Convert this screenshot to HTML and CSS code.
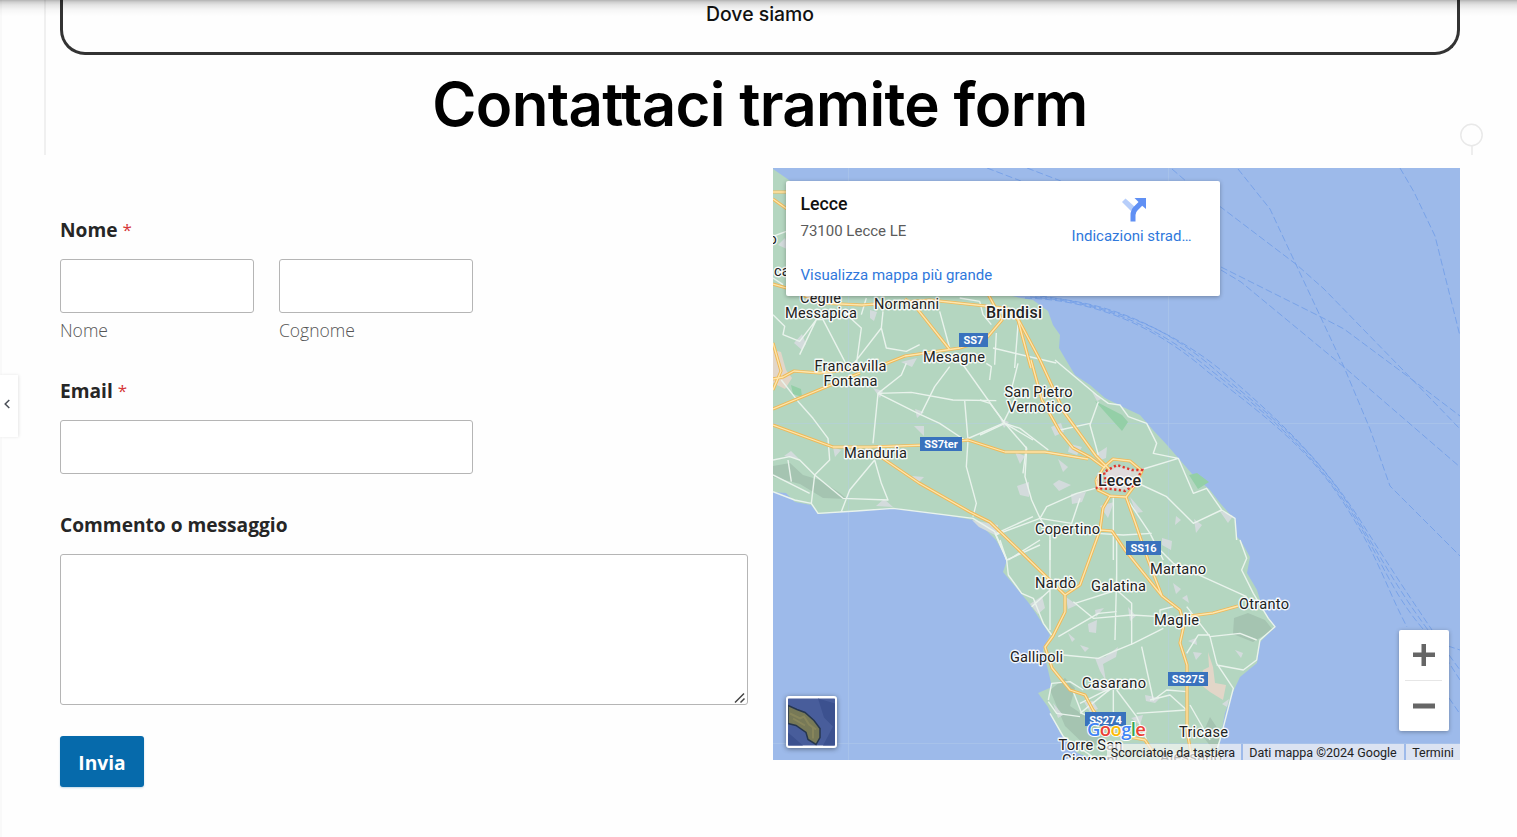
FILE: index.html
```html
<!DOCTYPE html>
<html lang="it">
<head>
<meta charset="utf-8">
<title>Contattaci</title>
<link rel="stylesheet" href="styles.css">
</head>
<body>
<div class="top-shadow"></div>
<div class="rail"></div>
<button class="drawer" aria-label="Apri"><svg width="8" height="10" viewBox="0 0 8 10"><path d="M6.3 1 2.2 5l4.1 4" fill="none" stroke="#4b5058" stroke-width="1.5"/></svg></button>
<div class="side-line"></div>
<svg class="marker" width="26" height="34" viewBox="0 0 26 34"><g fill="none" stroke="#e9e9e9" stroke-width="1.5"><circle cx="13.500" cy="13" r="10.700"/><path d="M14 24v9"/></g></svg>
<main class="page">
  <section class="where">Dove siamo</section>
  <h1 class="title"><span>Contattaci tramite form</span></h1>
  <div class="columns">
    <form class="form">
      <div class="label">Nome <span class="req">*</span></div>
      <div class="names">
        <div class="half"><input class="input"><div class="sub">Nome</div></div>
        <div class="half"><input class="input"><div class="sub">Cognome</div></div>
      </div>
      <div class="label email-label">Email <span class="req">*</span></div>
      <input class="input email">
      <div class="label message-label">Commento o messaggio</div>
      <div class="area"><svg width="12" height="12" viewBox="0 0 12 12"><path d="M1 10.5 10 1.5M6.5 10.5 10.5 6.5" stroke="#444" stroke-width="1.5" fill="none"/></svg></div>
      <button class="send" type="button">Invia</button>
    </form>
    <div class="map">
      <svg class="canvas" width="687" height="592" viewBox="773 168 687 592">
        <defs>
          <path id="roads" d="M773 192H787M773 199 787 209M773 284 790 289 820 303 862 305 930 300 1004 308M905 299 915 306 950 350M960 348 985 340 1002 320 988 294M1004 306 1018 320 1031 368M1031 360 1042 400 1060 432 1073 448 1090 457 1105 468M1017 317 1040 360 1064 412 1096 456 1110 470M773 379 783 377 794 371 820 373 880 366 905 356 960 348M773 409 826 387 860 373M773 425 833 447 870 447 925 445 968 440 1005 452 1045 452 1088 459M875 453 919 483 970 512 990 522 1022 553 1065 595M1096 480 1098 490 1110 496 1126 497 1135 485 1142 471 1130 461 1113 459 1104 467 1096 480M1110 496 1103 508 1100 530 1080 585 1065 595 1065 612 1053 636 1045 647 1052 668 1070 690 1085 695 1093 710 1110 733 1145 740 1155 755M1126 497 1135 522 1148 560 1162 596M1100 530 1112 531 1125 550 1162 596 1180 610 1184 625 1180 643 1187 665 1187 700 1187 730 1192 760M1190 616 1213 613 1238 606M773 343 781 371 773 390"/>
        </defs>
        <rect x="773" y="168" width="687" height="592" fill="#9dbaea"/>
        <path fill="#b4d6c0" d="M773 169 789 180 850 230 940 280 1021 298 1033 300 1048 311 1053 325 1060 335 1059 348 1066 360 1075 375 1090 385 1105 398 1123 407 1140 415 1153 430 1167 445 1180 460 1193 475 1210 490 1220 503 1235 520 1237 537 1241 541 1250 557 1247 573 1257 590 1263 610 1275 627 1260 642 1257 663 1240 677 1233 692 1225 713 1220 740 1218 760H1095L1077 753 1060 733 1048 707 1038 693 1052 687 1048 670 1043 650 1050 635 1035 612 1028 602 1003 572 1007 560 996 540 986 530 973 520 933 513 893 508 843 512 818 514 811 505 795 502 786 493 773 492Z"/>
        <g stroke="#b5cdea" stroke-width=".7" opacity=".65"><path d="M848.500 168V760M1168.500 168V760M773 423.500H1460M773 743.500H1460"/></g>
        <!-- ferry routes -->
        <g class="ferry">
          <path d="M987 168l34 13M1027 168l34 13M1172 169l22 19 28 20 75 57 27 24 77 79 60 62M1238 169l32 40 74 158 26 62 20 57 70 70M1400 168l14 24 21 44 25 100M1221 267l100 50 23 12 70 52 46 35M1221 270l20 12 103 85 116 100"/>
          <path d="M1025 298C1100 300 1160 330 1208 372C1270 420 1310 450 1345 505S1385 585 1407 627"/>
          <path d="M1030 297C1110 302 1165 332 1213 372C1275 420 1315 455 1350 510S1390 590 1423 629"/>
          <path d="M1035 297C1110 300 1172 330 1220 374C1280 422 1322 460 1355 515S1400 592 1428 630L1460 680"/>
          <path d="M1040 296C1115 305 1178 333 1228 376C1285 425 1325 465 1360 520S1405 590 1432 630M1448 646 1460 650M1449 655 1460 670M1449 698 1460 714"/>
        </g>
        <!-- relief and built-up areas -->
        <path fill="#a5c4b1" d="M773 466 790 463 803 475 820 480 840 493 847 499 823 498 800 484 773 477ZM1234 618l14-5 17 7 8 10-20 12-20-8ZM1050 690l15-12 10 10-5 18 15 10 20 20-15 14-25-24ZM1210 717l10 15-3 23-15-20Z"/>
        <path fill="#94cfa7" d="M1095 401 1122 415 1128 422 1122 431ZM1189 475l8-2 12 9-11 7ZM791 385l10 4 1 8-9-3Z"/>
        <path fill="#e2d6c8" d="M773 350l8 2 5 18 6 8-7 11-12-6ZM1208 652l5 15 2 16 11 2-3 15-13-8-10-8 3-14 6-3Z"/>
        <g fill="#d3dbdc">
          <path d="M794 343l8-9 4 10-4 6ZM870 310l7 2-3 9-4-3ZM873 388l10 3-3 7ZM915 409l9 3-7 6ZM914 426l10 0 0 10ZM876 506l8-7 9 8ZM912 476l12 1-6 6ZM833 447l8 3-6 7ZM784 456l7-5 8 8ZM901 362l16-4-5 9ZM1000 419l9 3-5 6ZM1015 452l10 4-5 8ZM1051 427l10-4 3 9-9 4ZM1070 444l12 3-5 8-9-3ZM1096 454l11-7-1 11-8 3ZM1092 392l5 3 4 4-4 2ZM1017 486l12-4 0 15-9-2ZM1058 459l10 8-5 5ZM1053 484l6-4 12 5-12 6ZM1071 494l15-2-4 10-10 2ZM1130 497l13 15-7 1ZM1100 506l14-4-6 16ZM1176 516l5 4-6 5ZM1194 519l8 6-6 8ZM1162 538l10 3-1 9-9-5ZM1219 510l14 6-5 7ZM1030 604l12-8 3 12-7 6ZM1066 597l11 8-9 4ZM1095 610l9-2-8 9ZM1088 624l9-4-1 13-7-1ZM1128 607l8 9-6 5ZM1173 583l8 6-5 5ZM1182 598l5-3 2 8ZM1188 641l8-3 1 7ZM1193 652l9 1-6 7ZM1068 633l7 6-3 3ZM1080 645l9 3-4 4ZM1095 658l10-1 13-10-2 10-13 7 3 17-6-10ZM1090 689l15-8 14 3-11 8ZM1145 695l15 3-5 5-9-2ZM1131 718l12-3-3 10ZM1053 703l10 12-5 3ZM1084 702l9-1 5 8-8 3ZM1222 704l7-5-2 8ZM1235 650l8 3-2 5Z"/>
          <path d="M1104 474l12-6 16 1-4 16-15 5ZM997 312l10-5 13 5-5 8ZM972 520l26 5-1 11-18-9ZM778 245l7-7 4 12Z"/>
        </g>
        <g class="minor">
          <g transform="translate(773 168) scale(.33333)"><path d="M0 440 35 475 30 500 80 520 130 455 150 455 220 590M130 455 80 560M210 430 265 480 250 590M265 440 280 390M330 430 325 480 340 540 400 550 440 530M325 480 240 590M500 430 530 540M620 400 630 440 655 470M670 495 665 590M735 470 725 600M660 540 850 585M0 205 40 190M0 330 30 350M560 390 620 400"/></g>
          <g transform="translate(773 360) scale(.33333)"><path d="M25 60 80 130 120 175 165 235 170 300 125 345 210 415 345 420 325 370 305 300 230 390 205 455M0 300 50 290 80 300 125 345 115 430M0 345 110 400M45 300 55 365M300 250 315 100 385 45 400 10M315 100 415 97 540 120 670 122M315 100 435 160 500 190 575 240 690 190M445 160 485 80 530 20M560 0 695 190 780 240M575 122 585 240 580 320 610 430 600 470M690 190 730 110M735 10 710 110M750 340 760 260M670 520 780 470M0 395 65 420 115 430 135 460 250 453 360 445 600 475 665 515 700 595M650 60 655 20 640 10"/></g>
          <g transform="translate(980 360) scale(.33333)"><path d="M0 225 75 190M75 190 30 130 0 120M75 190 140 265 135 350 155 420 180 475 45 525M75 190 120 205 205 270M225 0 350 105 385 130 420 135 445 170 500 190 530 250 520 280 595 295 480 330M355 125 330 195 355 285M240 210 330 190M595 295 640 400 680 385 725 450 765 475 770 540M485 375 560 410 640 490 725 450M345 385 290 400 200 440 180 475 210 520 210 600M300 415 275 490 180 475M400 410 400 600M440 415 510 520 550 600M350 520 430 525 515 520M45 520 80 600 180 555"/></g>
          <g transform="translate(980 540) scale(.33333)"><path d="M60 0 80 60 85 105 125 160 160 175 190 250 215 285M85 60 180 0M210 0 210 270M155 200 210 150M285 190 410 150 410 0M280 185 340 235 455 225 540 230M235 290 355 220 410 215M410 100 405 300M410 150 455 190 455 315M540 30 580 70 800 170M780 0 800 55 785 90 820 160 865 235 885 260 840 300 830 360 790 390 710 375M620 200 690 290 780 280 830 300M550 265 460 310 400 335 355 355 250 345M485 320 520 480 560 450 620 455M620 340 655 285 690 285M690 290 710 370 760 445 720 600 700 660M400 440 300 520M400 450 400 540M410 450 470 530 500 600M390 445 300 490M205 480 215 430 270 425 310 450M205 485 230 520 300 530M470 520 620 510 570 465 510 480M630 495 690 600M210 520 250 590 345 655M280 455 305 520 330 530M540 230 540 210 580 200"/></g>
        </g>
        <use href="#roads" class="road-case"/>
        <use href="#roads" class="road-core"/>
        <path d="M1106 484 1104 472 1117 465 1132 470 1142 470 1134 485 1125 491 1112 489 1096 488Z" fill="#eadbdc" fill-opacity=".6" stroke="#df352d" stroke-width="2.500" stroke-dasharray="2.200 2.500"/>
        <g fill="#3972bd"><rect x="959" y="333" width="29" height="14"/><rect x="920" y="437" width="42" height="14"/><rect x="1126" y="541" width="35" height="14"/><rect x="1168" y="672" width="40" height="14"/><rect x="1085" y="712" width="41" height="14"/></g>
        <g class="shield"><text x="973.500" y="344">SS7</text><text x="941" y="448">SS7ter</text><text x="1143.500" y="552">SS16</text><text x="1188" y="683">SS275</text><text x="1105.500" y="724">SS274</text></g>
        <g class="place">
          <text x="768.500" y="244">o</text><text x="774" y="276">ca</text>
          <text x="800" y="303.400" textLength="41">Ceglie</text><text x="785" y="318.400" textLength="72">Messapica</text>
          <text x="874" y="309.400" textLength="65">Normanni</text><text x="923" y="362.400" textLength="62">Mesagne</text>
          <text x="814.500" y="371.400" textLength="72">Francavilla</text><text x="823.500" y="386.400" textLength="54">Fontana</text>
          <text x="1004.500" y="397" textLength="68">San Pietro</text><text x="1007" y="412" textLength="64">Vernotico</text>
          <text x="844" y="458.400" textLength="63">Manduria</text><text x="1035" y="534.400" textLength="65">Copertino</text>
          <text x="1150" y="574.400" textLength="56">Martano</text><text x="1035" y="588" textLength="41">Nardò</text>
          <text x="1091" y="591" textLength="55">Galatina</text><text x="1239" y="609.400" textLength="50">Otranto</text>
          <text x="1154" y="625.400" textLength="45">Maglie</text><text x="1010" y="662" textLength="53">Gallipoli</text>
          <text x="1082" y="688.400" textLength="64">Casarano</text><text x="1179" y="737" textLength="49">Tricase</text>
          <text x="1058.500" y="750" textLength="64">Torre San</text><text x="1062" y="764.500" textLength="56">Giovanni</text><text x="1160" y="762" textLength="62">Alessano</text>
          <text class="city" x="986" y="318" textLength="56">Brindisi</text><text class="city" x="1098" y="486" textLength="43">Lecce</text>
        </g>
        <text class="logo" x="1087" y="735.500" textLength="59"><tspan fill="#4285f4">G</tspan><tspan fill="#ea4335">o</tspan><tspan fill="#fbbc05">o</tspan><tspan fill="#4285f4">g</tspan><tspan fill="#34a853">l</tspan><tspan fill="#ea4335">e</tspan></text>
      </svg>
      <div class="card">
        <div class="place-info"><div class="place-name">Lecce</div><div class="address">73100 Lecce LE</div><a class="link">Visualizza mappa più grande</a></div>
        <div class="directions"><svg width="24" height="24" viewBox="0 0 24 24"><path fill="#b7cefa" d="M3.500.5 0 4l9 9 4-4Z"/><path fill="#6090f4" d="M12.500 0H24v11l-3.800-3.300-4.500 4.500Q13.500 14 13.500 17v6.500H8.500V17q0-5 3.500-8.500l4.500-4.500Z"/></svg><span>Indicazioni strad…</span></div>
      </div>
      <svg class="satellite" width="47" height="47" viewBox="0 0 47 47"><rect width="47" height="47" fill="#485d9b"/><path d="M30 0 47 5V47H35L45 28 36 19ZM0 34 15 47H0Z" fill="#3c518f"/><path d="M0 7 9 11 17 14 26 22 32 30 32 39 28 46 20 41 18 34 8 27 0 25Z" fill="#777957" stroke="#26364e" stroke-width="1.500"/><path d="M2 15 12 20 16 18 21 26 25 29 25 40M5 20 17 27M20 25 28 31" fill="none" stroke="#938d5e" stroke-width="2" opacity=".6"/></svg>
      <div class="zoom"><svg width="50" height="101" viewBox="0 0 50 101"><path fill="#666" d="M14 22.500h8.500V14h4.500v8.500H36V27h-9v9h-4.500v-9H14ZM14 73.500h22v5H14Z"/><path stroke="#e6e6e6" d="M6 50.500h37"/></svg></div>
      <div class="credits"><span class="keys">Scorciatoie da tastiera</span><span class="data">Dati mappa ©2024 Google</span><span class="terms">Termini</span></div>
    </div>
  </div>
</main>
</body>
</html>
```

FILE: styles.css
```css
* { box-sizing: border-box; }
body { margin: 0; height: 837px; overflow: hidden; background: #fefefe; font-family: "Open Sans", sans-serif; }
.page { width: 1400px; margin-left: 60px; }
.top-shadow { position: absolute; z-index: 3; top: 0; left: 0; width: 100%; height: 16px; background: linear-gradient(#0000004d, #00000030 2px, #0000001a 5px, #00000008 10px, transparent); }
.rail { position: absolute; left: 0; top: 0; width: 2px; height: 837px; background: #f9f9f9; }
.side-line { position: absolute; left: 44px; top: 0; width: 2px; height: 155px; background: #f0f0f0; }
.marker { position: absolute; left: 1458px; top: 122px; }
.drawer { position: absolute; left: 0; top: 375px; width: 18px; height: 62px; padding: 0 0 4px 3px; border: 0; background: #fff; box-shadow: 1px 0 3px #00000018; display: flex; align-items: center; }
.where { height: 55px; border: 3px solid #333; border-top: 0; border-radius: 0 0 25px 25px; text-align: center; font: 500 19.4px/28px Inter, sans-serif; color: #111; }
.title { margin: 0; height: 113px; text-align: center; font: 600 60px/98px Inter, sans-serif; letter-spacing: -.68px; color: #000; white-space: nowrap; }
.columns { display: grid; grid-template-columns: 688px 687px; column-gap: 25px; }
.form { padding-top: 48px; }
.label { height: 28px; font-size: 19.15px; line-height: 28px; font-weight: 700; color: #262626; }
.req { display: inline-block; line-height: 20px; transform: translateY(-1px); color: #d63637; font-weight: 400; font-size: 17px; }
.names { display: flex; gap: 25px; margin-top: 15px; }
.half { width: 194px; }
.input { display: block; width: 100%; height: 54px; border: 1px solid #b5b5b5; border-radius: 3px; background: #fff; }
.sub { margin-top: 4px; margin-bottom: 1px; font-size: 17.5px; line-height: 26px; font-weight: 300; color: #555; }
.email-label { margin-top: 33px; }
.email { width: 413px; margin-top: 15px; }
.message-label { margin-top: 37px; }
.area { display: flex; align-items: flex-end; justify-content: flex-end; width: 688px; height: 151px; margin-top: 15px; padding: 0 1px 0 0; border: 1px solid #b5b5b5; border-radius: 3px; background: #fff; }
.send { display: block; width: 84px; height: 51px; margin-top: 31px; padding: 2px 0 0; border: 0; border-radius: 3px; background: #066aab; color: #fff; font: 700 19.2px "Open Sans", sans-serif; box-shadow: 0 1px 2px #066aab40; }
.map { position: relative; width: 687px; height: 592px; overflow: hidden; font-family: Roboto, sans-serif; }
.canvas { display: block; }
.ferry { fill: none; stroke: #749fe8; stroke-width: .9; stroke-dasharray: 7 3; }
.minor { fill: none; stroke: #e9f3ec; stroke-width: 4.2; stroke-linejoin: round; }
.road-case { fill: none; stroke: #efb958; stroke-width: 3.2; stroke-linejoin: round; }
.road-core { fill: none; stroke: #fde6ad; stroke-width: 1.3; stroke-linejoin: round; }
.place { font: 14.6px Roboto, sans-serif; fill: #222; stroke: #ffffffe0; stroke-width: 2.8px; paint-order: stroke; stroke-linejoin: round; }
.city { font-size: 16px; font-weight: 500; }
.shield { font: 700 11px Roboto, sans-serif; fill: #fff; text-anchor: middle; }
.logo { font: 600 18.5px "Open Sans", sans-serif; stroke: #fff; stroke-width: 2px; paint-order: stroke; }
.card { position: absolute; left: 13px; top: 13px; width: 434px; height: 115px; padding: 11px 28px 12px 14.5px; border-radius: 2px; background: #fff; box-shadow: 0 1px 4px #0000004d; display: flex; justify-content: space-between; font-size: 15px; }
.place-name { padding-top: 1px; font-size: 17.7px; line-height: 23px; font-weight: 500; color: #111; }
.address { margin-top: 5px; line-height: 20px; color: #5b5b5b; }
.link { display: block; margin-top: 24px; line-height: 20px; color: #2f78dc; white-space: nowrap; }
.directions { width: 121px; padding-top: 6px; display: flex; flex-direction: column; align-items: center; color: #2f78dc; line-height: 20px; white-space: nowrap; }
.directions svg { margin-left: 5px; }
.directions span { margin-top: 4px; }
.satellite { position: absolute; left: 13px; top: 528px; width: 51px; height: 52px; border: 2px solid #fff; border-radius: 3px; background: #fff; box-shadow: 0 1px 5px #00000070; }
.zoom { position: absolute; left: 626px; top: 462px; width: 50px; height: 101px; background: #fff; border-radius: 2px; box-shadow: 0 1px 4px #0000004d; }
.credits { position: absolute; right: 0; bottom: 0; display: flex; gap: 2px; height: 16px; font-size: 12.5px; line-height: 18px; color: #222; white-space: nowrap; }
.credits span { background: #f5f5f5b3; text-align: center; }
.keys { width: 134px; padding-right: 2px; }
.data { width: 161px; padding-right: 1px; }
.terms { width: 54px; }
```
